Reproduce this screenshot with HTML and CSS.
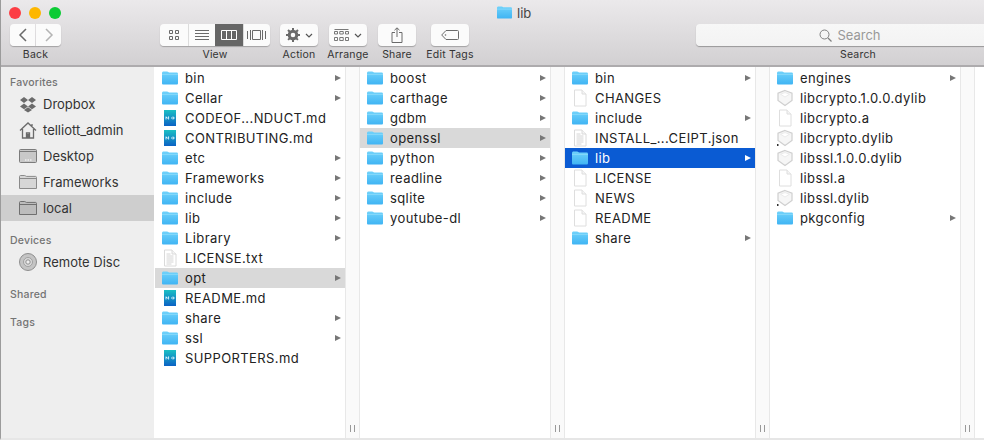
FILE: index.html
```html
<!DOCTYPE html>
<html lang="en">
  <head>
    <meta charset="UTF-8" />
    <title>lib</title>
    <link rel="stylesheet" href="styles.css">
  </head>
  <body>
    <svg class="defs" width="0" height="0">
      <defs>
        <linearGradient id="folderFill" x1="0" y1="0" x2="0" y2="1">
          <stop offset="0" stop-color="#6fd2fb" />
          <stop offset="1" stop-color="#3fb4f3" />
        </linearGradient>
        <linearGradient id="mdFill" x1="0" y1="0" x2="0" y2="1">
          <stop offset="0" stop-color="#1cc0c4" />
          <stop offset="1" stop-color="#0b62c4" />
        </linearGradient>
        <symbol id="folder" viewBox="0 0 18 16">
          <path d="M1 3.200C1 2 1.600 1.500 2.600 1.500h3.600c.9 0 1.200.9 2 .9h7.400c1 0 1.400.6 1.400 1.500v9.300c0 .9-.5 1.300-1.400 1.300H2.400c-.9 0-1.400-.4-1.400-1.300z" fill="url(#folderFill)" />
          <path d="M1 4.400h16" stroke="#8fdcfb" stroke-width=".8" />
        </symbol>
        <symbol id="doc" viewBox="0 0 18 18">
          <path d="M3.500 1h7.500l4 4v12h-11.500z" fill="#fff" stroke="#dedede" />
          <path d="M11 1v4h4" fill="#f5f5f5" stroke="#dedede" />
        </symbol>
        <symbol id="text" viewBox="0 0 18 18">
          <path d="M3.500 1h7.500l4 4v12h-11.500z" fill="#fff" stroke="#dadada" />
          <path d="M11 1v4h4" fill="#f5f5f5" stroke="#dadada" />
          <path d="M5.500 5h4M5.500 7h7M5.500 9h7M5.500 11h7M5.500 13h7M5.500 15h5" stroke="#d4d4d4" />
        </symbol>
        <symbol id="md" viewBox="0 0 18 18">
          <rect x="3" y="1" width="12" height="16" fill="url(#mdFill)" />
          <path d="M5 7.500v3M5 8l1.300 1.200L7.600 8M7.600 7.500v3M10 9h3M12 7.500l1.300 1.500L12 10.500" fill="none" stroke="#e8fbff" stroke-width=".9" />
        </symbol>
        <symbol id="dylib" viewBox="0 0 18 18">
          <path d="M9 1.500l7 2.600v7.400l-7 5-7-5V4.100z" fill="#f6f6f6" stroke="#cfcfcf" stroke-width="1.200" />
          <path d="M4.500 5.200L9 3.600l4.500 1.600L9 8z" fill="#fff" stroke="#e4e4e4" stroke-width=".7" />
        </symbol>
        <symbol id="dylink" viewBox="0 0 18 18">
          <path d="M9 1.500l7 2.600v7.400l-7 5-7-5V4.100z" fill="#f6f6f6" stroke="#cfcfcf" stroke-width="1.200" />
          <path d="M4.500 5.200L9 3.600l4.500 1.600L9 8z" fill="#fff" stroke="#e4e4e4" stroke-width=".7" />
          <path d="M1 15h1.500v2H1z" fill="#333" />
        </symbol>
      </defs>
    </svg>

    <div class="window">
      <header class="toolbar">
        <div class="titlebar">
          <span class="light red"></span>
          <span class="light yellow"></span>
          <span class="light green"></span>
          <div class="title">
            <svg class="title-icon"><use href="#folder" /></svg>
            <span>lib</span>
          </div>
        </div>
        <div class="tools">
          <div class="tool tool-back">
            <div class="btn-group">
              <div class="btn btn-nav">
                <svg width="10" height="14" viewBox="0 0 10 14"><path d="M8 1L2 7l6 6" fill="none" stroke="#6a6a6a" stroke-width="1.500" /></svg>
              </div>
              <div class="btn btn-nav">
                <svg width="10" height="14" viewBox="0 0 10 14"><path d="M2 1l6 6-6 6" fill="none" stroke="#b4b4b4" stroke-width="1.500" /></svg>
              </div>
            </div>
            <span class="tool-label">Back</span>
          </div>

          <div class="tool tool-view">
            <div class="btn-group">
              <div class="btn btn-view">
                <svg width="12" height="12" viewBox="0 0 12 12"><path d="M1.500 1.500h3v3h-3zM7.500 1.500h3v3h-3zM1.500 7.500h3v3h-3zM7.500 7.500h3v3h-3z" fill="none" stroke="#6a6a6a" /></svg>
              </div>
              <div class="btn btn-view">
                <svg width="16" height="12" viewBox="0 0 16 12"><path d="M1 1.500h14M1 4.500h14M1 7.500h14M1 10.500h14" stroke="#6a6a6a" /></svg>
              </div>
              <div class="btn btn-view btn-active">
                <svg width="16" height="10" viewBox="0 0 16 10"><path d="M.5.500h15v9H.5zM5.500.500v9M10.500.500v9" fill="none" stroke="#fff" /></svg>
              </div>
              <div class="btn btn-view">
                <svg width="19" height="12" viewBox="0 0 19 12"><path d="M5.500 1.500h8v9h-8zM3.500 1v10M15.500 1v10M.5 2v8M18.500 2v8" fill="none" stroke="#6a6a6a" /></svg>
              </div>
            </div>
            <span class="tool-label">View</span>
          </div>

          <div class="tool tool-action">
            <div class="btn btn-menu">
              <svg width="14" height="14" viewBox="0 0 14 14"><circle cx="7" cy="7" r="3.800" fill="none" stroke="#6a6a6a" stroke-width="3" /><path d="M7 0v14M0 7h14M2 2l10 10M12 2L2 12" stroke="#6a6a6a" stroke-width="2" stroke-dasharray="2.500 9" /></svg>
              <svg width="8" height="5" viewBox="0 0 8 5"><path d="M1 1l3 3 3-3" fill="none" stroke="#555" stroke-width="1.200" /></svg>
            </div>
            <span class="tool-label">Action</span>
          </div>

          <div class="tool tool-arrange">
            <div class="btn btn-menu">
              <svg width="15" height="13" viewBox="0 0 15 13"><path d="M.5.500h14M.5 2.500h3v2.500h-3zM5.750 2.500h3.500v2.500h-3.500zM11.500 2.500h3v2.500h-3zM.5 8.500h3v3h-3zM5.750 8.500h3.500v3h-3.500zM11.500 8.500h3v3h-3z" fill="none" stroke="#6a6a6a" stroke-width=".9" /></svg>
              <svg width="8" height="5" viewBox="0 0 8 5"><path d="M1 1l3 3 3-3" fill="none" stroke="#555" stroke-width="1.200" /></svg>
            </div>
            <span class="tool-label">Arrange</span>
          </div>

          <div class="tool tool-share">
            <div class="btn btn-wide">
              <svg width="12" height="16" viewBox="0 0 12 16"><path d="M4 5.500H1v10h10v-10H8M6 10V1M3.500 3.200L6 .8l2.500 2.400" fill="none" stroke="#6a6a6a" /></svg>
            </div>
            <span class="tool-label">Share</span>
          </div>

          <div class="tool tool-tags">
            <div class="btn btn-wide">
              <svg width="18" height="10" viewBox="0 0 18 10"><path d="M5 .5h11.500a1 1 0 0 1 1 1v7a1 1 0 0 1-1 1H5L.7 5z" fill="none" stroke="#6a6a6a" /><circle cx="4.500" cy="5" r=".8" fill="#6a6a6a" /></svg>
            </div>
            <span class="tool-label">Edit Tags</span>
          </div>

          <div class="tool tool-search">
            <div class="search">
              <svg width="13" height="13" viewBox="0 0 13 13"><circle cx="5.500" cy="5.500" r="4.500" fill="none" stroke="#808080" /><path d="M9 9l3.500 3.500" stroke="#808080" stroke-width="1.200" /></svg>
              <span>Search</span>
            </div>
            <span class="tool-label">Search</span>
          </div>
        </div>
      </header>

      <div class="main">
        <aside class="sidebar">
          <h2 class="side-head side-head-first">Favorites</h2>
          <div class="side-item">
            <svg class="side-icon" viewBox="0 0 18 18"><path d="M5 2L1 5l4 3 4-3zM13 2L9 5l4 3 4-3zM5 8.500L1 11.500l4 2.800 4-2.800zM13 8.500l-4 3 4 2.800 4-2.800zM5 15l4 2.500 4-2.500-4-2.700z" fill="#6b6b6b" /></svg>
            <span>Dropbox</span>
          </div>
          <div class="side-item">
            <svg class="side-icon" viewBox="0 0 18 18"><path d="M1 9.500L9 2l8 7.500M3.500 8v9h11V8M7.500 17v-5h3v5M13 3v3" fill="none" stroke="#6b6b6b" stroke-width="1.300" /><path d="M7.500 13h3v4h-3z" fill="#6b6b6b" /></svg>
            <span>telliott_admin</span>
          </div>
          <div class="side-item">
            <svg class="side-icon" viewBox="0 0 18 18"><rect x=".5" y="2.500" width="17" height="13" rx="1" fill="#c8c8c8" stroke="#7b7b7b" /><path d="M1 4.500h16" stroke="#7b7b7b" /><path d="M6 13h1.500M8.500 13H10M11 13h1.500" stroke="#fff" stroke-width="1.200" /></svg>
            <span>Desktop</span>
          </div>
          <div class="side-item">
            <svg class="side-icon" viewBox="0 0 18 18"><path d="M.5 3.500c0-.6.4-1 1-1h4.200c.8 0 1 .9 1.800.9h9c.6 0 1 .4 1 1v11.100H.5z" fill="#d6d6d6" stroke="#8a8a8a" /><path d="M1 5.500h16" stroke="#8a8a8a" /></svg>
            <span>Frameworks</span>
          </div>
          <div class="side-item side-item-active">
            <svg class="side-icon" viewBox="0 0 18 18"><path d="M.5 3.500c0-.6.4-1 1-1h4.200c.8 0 1 .9 1.800.9h9c.6 0 1 .4 1 1v11.100H.5z" fill="#bcbcbc" stroke="#6f6f6f" /><path d="M1 5.500h16" stroke="#6f6f6f" /></svg>
            <span>local</span>
          </div>

          <h2 class="side-head side-head-devices">Devices</h2>
          <div class="side-item">
            <svg class="side-icon" viewBox="0 0 18 18"><circle cx="9" cy="9" r="8.500" fill="#c4c4c4" stroke="#8e8e8e" /><circle cx="9" cy="9" r="4.500" fill="#dadada" stroke="#a0a0a0" /><circle cx="9" cy="9" r="2.200" fill="#eeeeee" stroke="#8e8e8e" /></svg>
            <span>Remote Disc</span>
          </div>

          <h2 class="side-head side-head-shared">Shared</h2>
          <h2 class="side-head side-head-tags">Tags</h2>
        </aside>

        <section class="browser">
          <div class="column">
            <div class="row"><svg class="icon"><use href="#folder" /></svg><span class="name">bin</span><i class="arrow"></i></div>
            <div class="row"><svg class="icon"><use href="#folder" /></svg><span class="name">Cellar</span><i class="arrow"></i></div>
            <div class="row"><svg class="icon"><use href="#md" /></svg><span class="name">CODEOF...NDUCT.md</span></div>
            <div class="row"><svg class="icon"><use href="#md" /></svg><span class="name">CONTRIBUTING.md</span></div>
            <div class="row"><svg class="icon"><use href="#folder" /></svg><span class="name">etc</span><i class="arrow"></i></div>
            <div class="row"><svg class="icon"><use href="#folder" /></svg><span class="name">Frameworks</span><i class="arrow"></i></div>
            <div class="row"><svg class="icon"><use href="#folder" /></svg><span class="name">include</span><i class="arrow"></i></div>
            <div class="row"><svg class="icon"><use href="#folder" /></svg><span class="name">lib</span><i class="arrow"></i></div>
            <div class="row"><svg class="icon"><use href="#folder" /></svg><span class="name">Library</span><i class="arrow"></i></div>
            <div class="row"><svg class="icon"><use href="#text" /></svg><span class="name">LICENSE.txt</span></div>
            <div class="row row-open"><svg class="icon"><use href="#folder" /></svg><span class="name">opt</span><i class="arrow"></i></div>
            <div class="row"><svg class="icon"><use href="#md" /></svg><span class="name">README.md</span></div>
            <div class="row"><svg class="icon"><use href="#folder" /></svg><span class="name">share</span><i class="arrow"></i></div>
            <div class="row"><svg class="icon"><use href="#folder" /></svg><span class="name">ssl</span><i class="arrow"></i></div>
            <div class="row"><svg class="icon"><use href="#md" /></svg><span class="name">SUPPORTERS.md</span></div>
          </div>
          <div class="gutter"><span class="grip"></span></div>

          <div class="column">
            <div class="row"><svg class="icon"><use href="#folder" /></svg><span class="name">boost</span><i class="arrow"></i></div>
            <div class="row"><svg class="icon"><use href="#folder" /></svg><span class="name">carthage</span><i class="arrow"></i></div>
            <div class="row"><svg class="icon"><use href="#folder" /></svg><span class="name">gdbm</span><i class="arrow"></i></div>
            <div class="row row-open"><svg class="icon"><use href="#folder" /></svg><span class="name">openssl</span><i class="arrow"></i></div>
            <div class="row"><svg class="icon"><use href="#folder" /></svg><span class="name">python</span><i class="arrow"></i></div>
            <div class="row"><svg class="icon"><use href="#folder" /></svg><span class="name">readline</span><i class="arrow"></i></div>
            <div class="row"><svg class="icon"><use href="#folder" /></svg><span class="name">sqlite</span><i class="arrow"></i></div>
            <div class="row"><svg class="icon"><use href="#folder" /></svg><span class="name">youtube-dl</span><i class="arrow"></i></div>
          </div>
          <div class="gutter"><span class="grip"></span></div>

          <div class="column">
            <div class="row"><svg class="icon"><use href="#folder" /></svg><span class="name">bin</span><i class="arrow"></i></div>
            <div class="row"><svg class="icon"><use href="#doc" /></svg><span class="name">CHANGES</span></div>
            <div class="row"><svg class="icon"><use href="#folder" /></svg><span class="name">include</span><i class="arrow"></i></div>
            <div class="row"><svg class="icon"><use href="#text" /></svg><span class="name">INSTALL_...CEIPT.json</span></div>
            <div class="row row-selected"><svg class="icon"><use href="#folder" /></svg><span class="name">lib</span><i class="arrow"></i></div>
            <div class="row"><svg class="icon"><use href="#doc" /></svg><span class="name">LICENSE</span></div>
            <div class="row"><svg class="icon"><use href="#doc" /></svg><span class="name">NEWS</span></div>
            <div class="row"><svg class="icon"><use href="#doc" /></svg><span class="name">README</span></div>
            <div class="row"><svg class="icon"><use href="#folder" /></svg><span class="name">share</span><i class="arrow"></i></div>
          </div>
          <div class="gutter"><span class="grip"></span></div>

          <div class="column">
            <div class="row"><svg class="icon"><use href="#folder" /></svg><span class="name">engines</span><i class="arrow"></i></div>
            <div class="row"><svg class="icon"><use href="#dylib" /></svg><span class="name">libcrypto.1.0.0.dylib</span></div>
            <div class="row"><svg class="icon"><use href="#doc" /></svg><span class="name">libcrypto.a</span></div>
            <div class="row"><svg class="icon"><use href="#dylink" /></svg><span class="name">libcrypto.dylib</span></div>
            <div class="row"><svg class="icon"><use href="#dylib" /></svg><span class="name">libssl.1.0.0.dylib</span></div>
            <div class="row"><svg class="icon"><use href="#doc" /></svg><span class="name">libssl.a</span></div>
            <div class="row"><svg class="icon"><use href="#dylink" /></svg><span class="name">libssl.dylib</span></div>
            <div class="row"><svg class="icon"><use href="#folder" /></svg><span class="name">pkgconfig</span><i class="arrow"></i></div>
          </div>
          <div class="gutter"><span class="grip"></span></div>
        </section>
      </div>
    </div>
  </body>
</html>
```

FILE: styles.css
```css
* {
  box-sizing: border-box;
}
body {
  margin: 0;
  background: #fff;
  font-family: Inter, "Liberation Sans", Arial, sans-serif;
  color: #222;
  overflow: hidden;
}
.defs {
  display: block;
  height: 0;
}
.window {
  width: 984px;
  height: 440px;
  display: flex;
  flex-direction: column;
  border-left: 1px solid #9b9b9b;
  border-bottom: 2px solid #e6e6e6;
}

/* toolbar */
.toolbar {
  height: 67px;
  flex: none;
  background: linear-gradient(#ebe9eb, #d2d0d2);
  border-bottom: 2px solid #adabad;
}
.titlebar {
  height: 22px;
  padding: 3px 0 0 8px;
  display: flex;
  align-items: center;
  gap: 8px;
}
.light {
  width: 12px;
  height: 12px;
  border-radius: 50%;
}
.red {
  background: #fc3d44;
}
.yellow {
  background: #fdb700;
}
.green {
  background: #0ccb35;
}
.title {
  margin-left: 427px;
  display: flex;
  align-items: center;
  gap: 4px;
  font-size: 13px;
  color: #444;
}
.title-icon {
  width: 17px;
  height: 15px;
}
.tools {
  display: flex;
  padding-left: 9px;
  margin-top: 2px;
}
.tool {
  display: flex;
  flex-direction: column;
  align-items: center;
  flex: none;
  width: 38px;
}
.tool-label {
  margin-top: 2px;
  font-size: 10.500px;
  line-height: 13px;
  letter-spacing: 0.2px;
  color: #333;
  white-space: nowrap;
}
.btn-group {
  display: flex;
  height: 22px;
  border-radius: 4px;
  overflow: hidden;
  box-shadow: 0 1px 1px rgba(0, 0, 0, 0.25);
}
.btn {
  height: 22px;
  background: #fbfbfb;
  display: flex;
  align-items: center;
  justify-content: center;
}
.btn-nav {
  width: 25px;
}
.btn-nav + .btn-nav {
  margin-left: 1px;
}
.btn-view {
  width: 27.500px;
  border-left: 1px solid #dcdcdc;
}
.btn-view:first-child {
  border-left: 0;
}
.btn-active {
  background: #666;
  border-left: 0;
}
.btn-menu {
  width: 38px;
  flex: none;
  gap: 5px;
  border-radius: 4px;
  box-shadow: 0 1px 1px rgba(0, 0, 0, 0.25);
}
.btn-wide {
  width: 38px;
  flex: none;
  border-radius: 4px;
  box-shadow: 0 1px 1px rgba(0, 0, 0, 0.25);
}
.tool-back {
  width: 51px;
}
.tool-view {
  width: 110px;
  margin-left: 99px;
}
.tool-action {
  margin-left: 10px;
}
.tool-arrange {
  margin-left: 11px;
}
.tool-share {
  margin-left: 11px;
}
.tool-tags {
  margin-left: 15px;
}
.tool-search {
  margin-left: 227px;
  width: 324px;
}
.search {
  width: 100%;
  height: 22px;
  padding-right: 16px;
  border-radius: 4px;
  background: linear-gradient(#f7f7f7, #f3f3f3);
  box-shadow: 0 1px 1px rgba(0, 0, 0, 0.3);
  display: flex;
  align-items: center;
  justify-content: center;
  gap: 5px;
  font-size: 13px;
  color: #999;
}

/* main area */
.main {
  flex: 1;
  display: flex;
  min-height: 0;
}
.sidebar {
  width: 153px;
  flex: none;
  background: #eeeeee;
  font-size: 13px;
  color: #333;
}
.side-head {
  margin: 0;
  padding-left: 9px;
  font-size: 10.500px;
  line-height: 13px;
  letter-spacing: 0.2px;
  font-weight: 500;
  color: #747474;
}
.side-head-first {
  padding-top: 9px;
  margin-bottom: 2px;
}
.side-head-devices {
  margin-top: 13px;
  margin-bottom: 2px;
}
.side-head-shared {
  margin-top: 13px;
}
.side-head-tags {
  margin-top: 15px;
}
.side-item {
  height: 26px;
  padding-left: 18px;
  display: flex;
  align-items: center;
  gap: 6px;
}
.side-item-active {
  background: #cecece;
}
.side-icon {
  width: 18px;
  height: 18px;
  flex: none;
}

/* column browser */
.browser {
  flex: 1;
  display: flex;
  padding-left: 1px;
  background: #fff;
}
.column {
  width: 190px;
  flex: none;
  padding-top: 1px;
  font-size: 13px;
  letter-spacing: 0.4px;
}
.gutter {
  width: 15px;
  flex: none;
  background: #fafafa;
  border-left: 1px solid #e8e8e8;
  border-right: 1px solid #e8e8e8;
  display: flex;
  align-items: flex-end;
  justify-content: center;
  padding-bottom: 6px;
}
.grip {
  width: 5px;
  height: 7px;
  border-left: 1px solid #999;
  border-right: 1px solid #999;
}
.row {
  height: 20px;
  padding: 0 4px 0 6px;
  display: flex;
  align-items: center;
}
.icon {
  width: 18px;
  height: 18px;
  flex: none;
  margin-right: 6px;
}
.name {
  flex: 1;
  white-space: nowrap;
}
.arrow {
  width: 0;
  height: 0;
  border-left: 6px solid #777;
  border-top: 3.500px solid transparent;
  border-bottom: 3.500px solid transparent;
}
.row-open {
  background: #d9d9d9;
}
.row-selected {
  background: #0a5bd3;
  color: #fff;
}
.row-selected .arrow {
  border-left-color: #fff;
}
```
